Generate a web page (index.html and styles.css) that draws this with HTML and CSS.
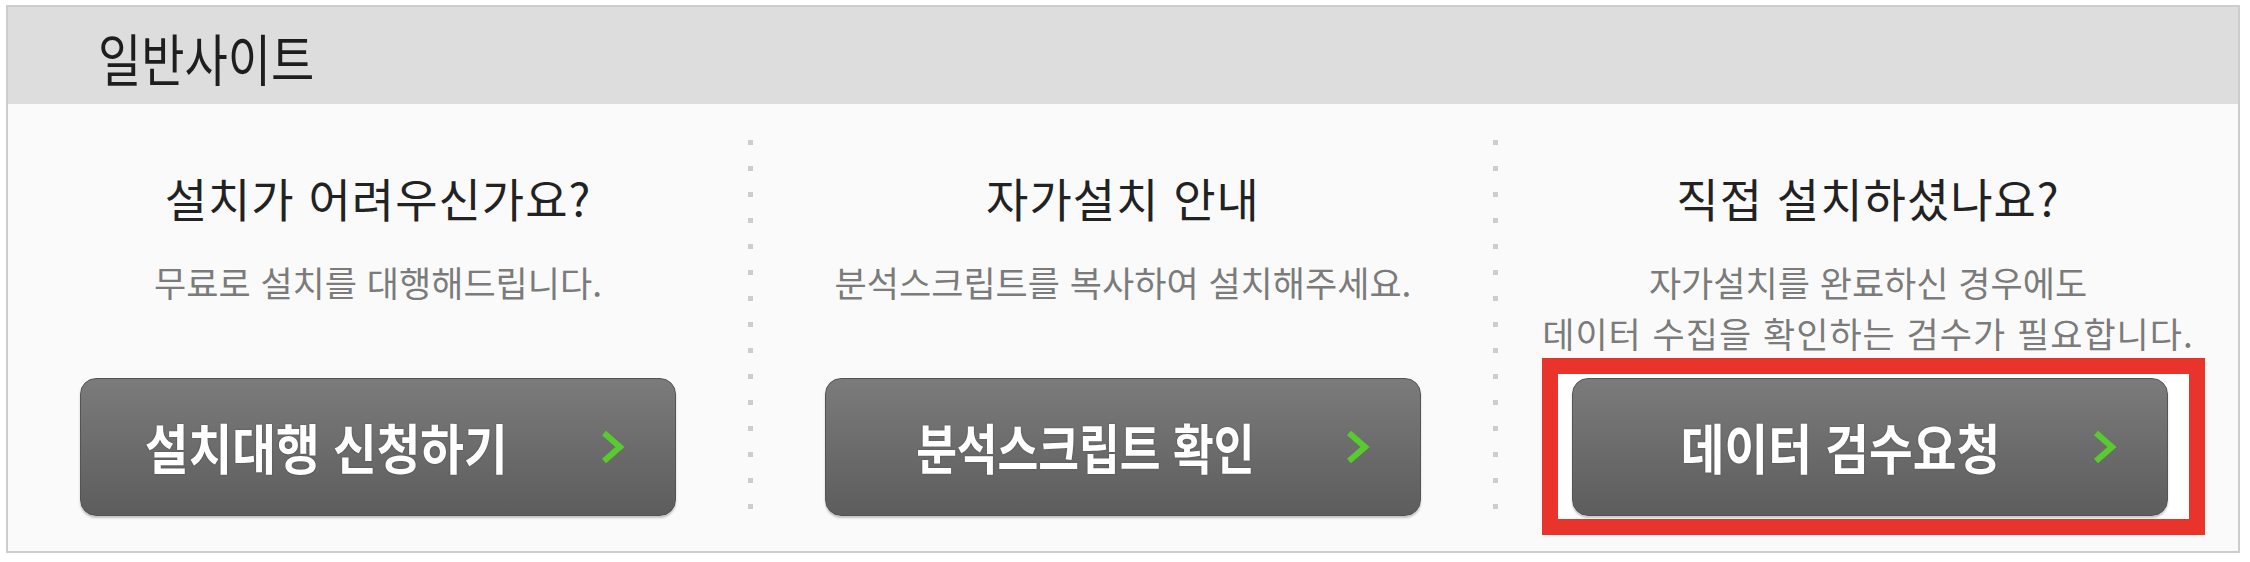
FILE: index.html
```html
<!DOCTYPE html>
<html lang="ko">
<head>
<meta charset="utf-8">
<title>일반사이트</title>
<link rel="stylesheet" href="styles.css">
</head>
<body>
<div class="page">
  <section class="panel">
    <header class="panel-head"><h1 class="title">일반사이트</h1></header>
    <div class="cols">
      <div class="col">
        <h2>설치가 어려우신가요?</h2>
        <p>무료로 설치를 대행해드립니다.</p>
        <a class="btn btn--install" href="#"><span class="btn-label"><span>설치대행 신청하기</span></span><svg class="chev" viewBox="0 0 25 36"><polyline points="4,4 20,18 4,32" fill="none" stroke="#58cc2e" stroke-width="6" stroke-linejoin="miter" stroke-linecap="butt"/></svg></a>
      </div>
      <div class="divider"></div>
      <div class="col">
        <h2>자가설치 안내</h2>
        <p>분석스크립트를 복사하여 설치해주세요.</p>
        <a class="btn btn--script" href="#"><span class="btn-label"><span>분석스크립트 확인</span></span><svg class="chev" viewBox="0 0 25 36"><polyline points="4,4 20,18 4,32" fill="none" stroke="#58cc2e" stroke-width="6" stroke-linejoin="miter" stroke-linecap="butt"/></svg></a>
      </div>
      <div class="divider"></div>
      <div class="col">
        <h2>직접 설치하셨나요?</h2>
        <p>자가설치를 완료하신 경우에도<br><span class="wide">데이터 수집을 확인하는 검수가 필요합니다.</span></p>
        <div class="highlight">
          <a class="btn btn--verify" href="#"><span class="btn-label"><span>데이터 검수요청</span></span><svg class="chev" viewBox="0 0 25 36"><polyline points="4,4 20,18 4,32" fill="none" stroke="#58cc2e" stroke-width="6" stroke-linejoin="miter" stroke-linecap="butt"/></svg></a>
        </div>
      </div>
    </div>
  </section>
</div>
</body>
</html>
```

FILE: styles.css
```css
html, body {
  margin: 0;
  padding: 0;
  background: #ffffff;
  font-family: "Noto Sans CJK KR", "Noto Sans", sans-serif;
}

.page {
  padding: 5px 0 0 6px;
}

.panel {
  width: 2234px;
  height: 548px;
  box-sizing: border-box;
  border: 2px solid #cdcdcd;
  background: #fafafa;
  display: flex;
  flex-direction: column;
}

.panel-head {
  flex: none;
  height: 97px;
  background: #dddddd;
  display: flex;
  align-items: center;
  padding-left: 90px;
  padding-top: 2px;
  box-sizing: border-box;
}

.title {
  margin: 0;
  display: inline-block;
  font-size: 56px;
  line-height: 60px;
  font-weight: 400;
  color: #1e1e1e;
  transform: scaleX(0.84);
  transform-origin: left center;
}

.cols {
  flex: 1;
  display: grid;
  grid-template-columns: 1fr 5px 1fr 5px 1fr;
}

.col {
  display: flex;
  flex-direction: column;
  align-items: center;
  text-align: center;
  padding: 67px 0 37px;
}

.divider {
  margin: 36px 0 24px;
  background: repeating-linear-gradient(to bottom, #cdcdcd 0 5px, transparent 5px 26px);
}

.col h2 {
  margin: 0;
  font-size: 46px;
  line-height: 52px;
  font-weight: 400;
  letter-spacing: 1px;
  color: #222222;
}

.col p {
  margin: 33px 0 0;
  font-size: 35px;
  line-height: 51px;
  color: #7b7b7b;
}

.col p .wide {
  letter-spacing: 1px;
}

.btn {
  margin-top: auto;
  width: 596px;
  height: 138px;
  box-sizing: border-box;
  border-radius: 16px;
  border: 1px solid #545454;
  background: linear-gradient(to bottom, #7b7b7b 0%, #6c6c6c 50%, #5d5d5d 100%);
  box-shadow: 0 2px 2px rgba(0, 0, 0, 0.22);
  display: flex;
  align-items: center;
  padding-right: 50px;
  text-decoration: none;
}

.btn-label {
  flex: 1;
  text-align: center;
  color: #ffffff;
  font-size: 54px;
  line-height: 60px;
  font-weight: 700;
  text-shadow: 0 0 2px rgba(0, 0, 0, 0.35);
}

.btn-label span {
  display: inline-block;
  transform: scaleX(0.88);
}

.btn--install .btn-label {
  padding-right: 28px;
}

.btn--script .btn-label span {
  transform: scaleX(0.82);
}

.btn--verify .btn-label {
  padding-left: 16px;
}

.chev {
  flex: none;
  width: 25px;
  height: 36px;
}

.highlight {
  margin-top: auto;
  margin-bottom: -19px;
  margin-left: 10px;
  border: 16px solid #e8342a;
  padding: 4px 21px 3px 14px;
  background: #ffffff;
}

.highlight .btn {
  margin-top: 0;
}
```
